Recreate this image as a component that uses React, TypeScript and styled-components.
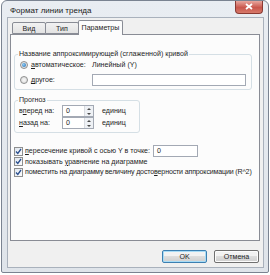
import styled, { createGlobalStyle } from "styled-components";

const GlobalStyle = createGlobalStyle`
  html, body {
    margin: 0;
    padding: 0;
    background: #ffffff;
  }
  body {
    font-family: "Liberation Sans", Arial, sans-serif;
    font-size: 7.1px;
    color: #1e1e1e;
  }
`;

const Window = styled.div`
  box-sizing: border-box;
  width: 268px;
  height: 273px;
  margin: 0 0 0 1px;
  border: 1px solid #7a8391;
  border-radius: 6px 6px 2px 2px;
  background: linear-gradient(#e9edf2, #dfe4ea);
  display: flex;
  flex-direction: column;
  padding: 0 4px 4px 5px;
`;

const TitleBar = styled.div`
  height: 17px;
  display: flex;
  align-items: center;
  justify-content: space-between;
  padding-left: 3px;
`;

const Title = styled.span`
  font-size: 8px;
  color: #1a1a1a;
  margin-top: 2px;
`;

const CloseButton = styled.div`
  width: 28px;
  height: 13px;
  margin-top: -4px;
  margin-right: 1px;
  border: 1px solid #8a3a33;
  border-top: none;
  border-radius: 0 0 4px 4px;
  background: linear-gradient(#e8a79e, #c9564c 55%, #d77a6b);
  display: flex;
  align-items: center;
  justify-content: center;
  box-sizing: border-box;
`;

const Client = styled.div`
  flex: 1;
  border: 1px solid #a9b1bc;
  background: #f0f0f0;
  display: flex;
  flex-direction: column;
  padding: 2px 3px 4px 2px;
`;

const TabRow = styled.div`
  display: flex;
  align-items: flex-end;
  height: 14px;
  padding-left: 2px;
`;

const Tab = styled.div<{ active?: boolean }>`
  box-sizing: border-box;
  width: ${({ active }) => (active ? 45 : 34)}px;
  height: ${({ active }) => (active ? 15 : 12)}px;
  margin-right: ${({ active }) => (active ? 0 : -1)}px;
  margin-bottom: ${({ active }) => (active ? -1 : 0)}px;
  border: 1px solid #898c95;
  border-bottom: ${({ active }) => (active ? "none" : "1px solid #898c95")};
  border-radius: 2px 2px 0 0;
  background: ${({ active }) =>
    active ? "#fcfcfc" : "linear-gradient(#f2f2f2, #e3e3e3)"};
  display: flex;
  align-items: center;
  justify-content: center;
  position: relative;
  z-index: ${({ active }) => (active ? 1 : 0)};
  padding-top: ${({ active }) => (active ? 0 : 1)}px;
`;

const Panel = styled.div`
  box-sizing: border-box;
  height: 207px;
  border: 1px solid #898c95;
  background: #fcfcfc;
  padding: 15px 9px 0 3px;
  display: flex;
  flex-direction: column;
`;

const Group = styled.fieldset<{ width?: number; pad?: number }>`
  margin: 0;
  padding: 1px 5px 3px ${({ pad }) => pad ?? 5}px;
  border: 1px solid #d5dfe5;
  border-radius: 3px;
  width: ${({ width }) => (width ? `${width}px` : "auto")};
  box-sizing: border-box;
  display: flex;
  flex-direction: column;
`;

const Legend = styled.legend<{ shift?: number }>`
  padding: 0 1px;
  margin-left: ${({ shift }) => shift ?? -2}px;
  font-size: 7.1px;
`;

const Row = styled.div<{ gap?: number; mt?: number }>`
  display: flex;
  align-items: center;
  height: 12px;
  margin-top: ${({ mt }) => mt ?? 0}px;
  gap: ${({ gap }) => gap ?? 3}px;
  white-space: nowrap;
`;

const Radio = styled.span<{ checked?: boolean }>`
  box-sizing: border-box;
  width: 8px;
  height: 8px;
  border-radius: 50%;
  border: 1px solid #8e8f8f;
  background: radial-gradient(circle, #f8f8f8, #d6d6d6);
  display: flex;
  align-items: center;
  justify-content: center;
  &::after {
    content: "";
    width: 4px;
    height: 4px;
    border-radius: 50%;
    background: ${({ checked }) =>
      checked ? "radial-gradient(circle at 40% 40%, #8fd0f8, #1a5fa8)" : "transparent"};
  }
`;

const Label = styled.span<{ w?: number; tight?: boolean }>`
  display: inline-block;
  width: ${({ w }) => (w ? `${w}px` : "auto")};
  white-space: nowrap;
  letter-spacing: ${({ tight }) => (tight ? "-0.17px" : "normal")};
`;

const TextInput = styled.div<{ w: number }>`
  box-sizing: border-box;
  width: ${({ w }) => w}px;
  height: 12px;
  border: 1px solid #a3a9b4;
  background: #ffffff;
  padding-left: 3px;
  display: flex;
  align-items: center;
`;

const Spin = styled.div`
  box-sizing: border-box;
  width: 32px;
  height: 12px;
  border: 1px solid #a3a9b4;
  background: #ffffff;
  display: flex;
`;

const SpinValue = styled.span`
  flex: 1;
  padding-left: 3px;
  display: flex;
  align-items: center;
`;

const SpinArrows = styled.div`
  width: 8px;
  display: flex;
  flex-direction: column;
  border-left: 1px solid #d8dbe0;
`;

const SpinArrow = styled.div<{ down?: boolean }>`
  flex: 1;
  display: flex;
  align-items: center;
  justify-content: center;
  background: #eef1f5;
  &::after {
    content: "";
    border-left: 2px solid transparent;
    border-right: 2px solid transparent;
    ${({ down }) =>
      down ? "border-top: 2px solid #4a4a4a;" : "border-bottom: 2px solid #4a4a4a;"}
  }
`;

const CheckList = styled.div`
  display: flex;
  flex-direction: column;
  margin-top: 13px;
`;

const Check = styled.span`
  box-sizing: border-box;
  flex: none;
  width: 9px;
  height: 9px;
  border: 1px solid #8e8f8f;
  background: linear-gradient(135deg, #dfe6ee, #fdfdfd);
  display: flex;
  align-items: center;
  justify-content: center;
`;

const CheckLine = styled(Row)`
  height: 10.5px;
  gap: 2px;
`;

const Footer = styled.div`
  display: flex;
  justify-content: flex-end;
  gap: 7px;
  padding-top: 9px;
  padding-right: 1px;
`;

const Button = styled.div<{ primary?: boolean }>`
  box-sizing: border-box;
  width: 45px;
  height: 13px;
  border: 1px solid ${({ primary }) => (primary ? "#3c7fb1" : "#707070")};
  border-radius: 2px;
  background: linear-gradient(#f2f2f2 50%, #dddddd 50%, #cfcfcf);
  box-shadow: ${({ primary }) => (primary ? "inset 0 0 0 1px #a8dcf6" : "inset 0 0 0 1px #fcfcfc")};
  display: flex;
  align-items: center;
  justify-content: center;
`;

const Tick = () => (
  <svg width="7" height="7" viewBox="0 0 7 7">
    <path d="M1 3.5 L2.8 5.5 L6 1" fill="none" stroke="#2a4f8f" strokeWidth="1.3" />
  </svg>
);

const CheckRow = ({ children }: { children: React.ReactNode }) => (
  <CheckLine>
    <Check>
      <Tick />
    </Check>
    {children}
  </CheckLine>
);

const SpinBox = () => (
  <Spin>
    <SpinValue>0</SpinValue>
    <SpinArrows>
      <SpinArrow />
      <SpinArrow down />
    </SpinArrows>
  </Spin>
);

const App = () => (
  <>
    <GlobalStyle />
    <Window>
      <TitleBar>
        <Title>Формат линии тренда</Title>
        <CloseButton>
          <svg width="8" height="7" viewBox="0 0 8 7">
            <path d="M1 1 L7 6 M7 1 L1 6" stroke="#ffffff" strokeWidth="1.8" />
          </svg>
        </CloseButton>
      </TitleBar>
      <Client>
        <TabRow>
          <Tab>Вид</Tab>
          <Tab>Тип</Tab>
          <Tab active>Параметры</Tab>
        </TabRow>
        <Panel>
          <Group>
            <Legend>Название аппроксимирующей (сглаженной) кривой</Legend>
            <Row gap={3}>
              <Radio checked />
              <Label w={58}>
                <u>а</u>втоматическое:
              </Label>
              <span>Линейный (Y)</span>
            </Row>
            <Row gap={3} mt={3}>
              <Radio />
              <Label w={58}>
                <u>д</u>ругое:
              </Label>
              <TextInput w={154} />
            </Row>
          </Group>
          <Group width={126} pad={4} style={{ marginTop: 6 }}>
            <Legend shift={-1}>Прогноз</Legend>
            <Row gap={0}>
              <Label w={43}>
                в<u>п</u>еред на:
              </Label>
              <SpinBox />
              <Label style={{ marginLeft: 8 }}>единиц</Label>
            </Row>
            <Row gap={0}>
              <Label w={43}>
                <u>н</u>азад на:
              </Label>
              <SpinBox />
              <Label style={{ marginLeft: 8 }}>единиц</Label>
            </Row>
          </Group>
          <CheckList>
            <CheckRow>
              <Label w={126}>
                <u>п</u>ересечение кривой с осью Y в точке:
              </Label>
              <TextInput w={45}>0</TextInput>
            </CheckRow>
            <CheckRow>
              <Label>
                показывать <u>у</u>равнение на диаграмме
              </Label>
            </CheckRow>
            <CheckRow>
              <Label tight>
                поместить на диаграмму величину досто<u>в</u>ерности аппроксимации (R^2)
              </Label>
            </CheckRow>
          </CheckList>
        </Panel>
        <Footer>
          <Button primary>OK</Button>
          <Button>Отмена</Button>
        </Footer>
      </Client>
    </Window>
  </>
);

export default App;
